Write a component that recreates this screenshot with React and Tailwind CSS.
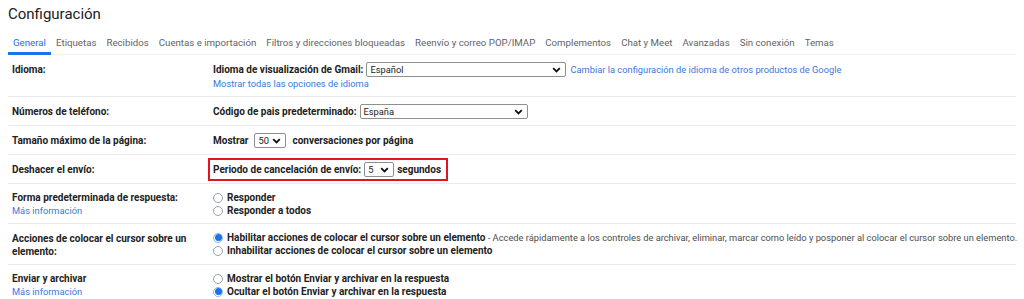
import React from "react";

const TABS = [
  "General",
  "Etiquetas",
  "Recibidos",
  "Cuentas e importación",
  "Filtros y direcciones bloqueadas",
  "Reenvío y correo POP/IMAP",
  "Complementos",
  "Chat y Meet",
  "Avanzadas",
  "Sin conexión",
  "Temas",
];

function Chevron() {
  return (
    <svg width="9" height="6" viewBox="0 0 9 6" className="shrink-0">
      <polyline points="1.2,1.2 4.5,4.5 7.8,1.2" fill="none" stroke="#111" strokeWidth="1.8" />
    </svg>
  );
}

function Select({ value, width }) {
  return (
    <div
      className={`flex h-[15px] items-center justify-between rounded-[2px] border border-[#8f8f8f] bg-white pl-[3px] pr-[4px] text-[9.3px] font-normal text-[#222] ${width}`}
    >
      <span>{value}</span>
      <Chevron />
    </div>
  );
}

function Radio({ checked }) {
  return checked ? (
    <span className="flex h-[10px] w-[10px] shrink-0 items-center justify-center rounded-full border border-[#8ab4f8]">
      <span className="h-[7px] w-[7px] rounded-full bg-[#1a73e8]" />
    </span>
  ) : (
    <span className="h-[10px] w-[10px] shrink-0 rounded-full border border-[#9aa0a6] bg-white" />
  );
}

function RadioLine({ checked, children }) {
  return (
    <div className="flex h-[13px] items-center gap-[4px] whitespace-nowrap">
      <Radio checked={checked} />
      <span>{children}</span>
    </div>
  );
}

function Row({ label, link, children, last }) {
  return (
    <div className={`flex pt-[7px] pb-[6px] ${last ? "" : "border-b border-[#ebebeb]"}`}>
      <div className="w-[205px] shrink-0 pl-[4px] pr-[14px] font-bold leading-[13px] text-[#222]">
        <div className={link ? "" : "pt-[1px]"}>{label}</div>
        {link && <div className="text-[9.3px] font-normal text-[#3c78d8]">{link}</div>}
      </div>
      <div className="min-w-0 flex-1 leading-[13px]">{children}</div>
    </div>
  );
}

export default function App() {
  return (
    <div
      className="h-[299px] w-[1024px] overflow-hidden bg-white text-[10px] text-[#222]"
      style={{ fontFamily: "Roboto, Arial, sans-serif" }}
    >
      <div className="px-2">
        <h1 className="pt-[3px] text-[15px] leading-[22px] text-[#202124]">Configuración</h1>

        {/* tabs */}
        <div className="mt-[5px] flex border-b border-[#efefef] text-[9.7px]">
          {TABS.map((t, i) => (
            <div
              key={t}
              className={`whitespace-nowrap px-[5px] pt-[6px] pb-[3px] leading-[13px] ${
                i === 0 ? "-mb-px border-b-[3px] border-[#1a73e8] pb-[1px] text-[#1a73e8]" : "text-[#5f6368]"
              }`}
            >
              {t}
            </div>
          ))}
        </div>

        {/* settings rows */}
        <Row label="Idioma:">
          <div className="flex items-center gap-[3px] font-bold">
            <span>Idioma de visualización de Gmail:</span>
            <Select value="Español" width="w-[200px]" />
            <span className="ml-[1px] text-[9.3px] font-normal text-[#3c78d8]">
              Cambiar la configuración de idioma de otros productos de Google
            </span>
          </div>
          <div className="text-[9.3px] text-[#3c78d8]">Mostrar todas las opciones de idioma</div>
        </Row>

        <Row label="Números de teléfono:">
          <div className="flex items-center gap-[3px] font-bold">
            <span>Código de pais predeterminado:</span>
            <Select value="España" width="w-[168px]" />
          </div>
        </Row>

        <Row label="Tamaño máximo de la página:">
          <div className="flex items-center gap-[6px] font-bold">
            <span>Mostrar</span>
            <Select value="50" width="w-[32px]" />
            <span>conversaciones por página</span>
          </div>
        </Row>

        <Row label="Deshacer el envío:">
          <div className="-my-[4px] -ml-[5px] inline-flex items-center gap-[3px] border-2 border-[#e3141f] py-[2px] pl-[3px] pr-[5px] font-bold">
            <span>Periodo de cancelación de envío:</span>
            <Select value="5" width="w-[30px]" />
            <span>segundos</span>
          </div>
        </Row>

        <Row label="Forma predeterminada de respuesta:" link="Más información">
          <div className="font-bold">
            <RadioLine>Responder</RadioLine>
            <RadioLine>Responder a todos</RadioLine>
          </div>
        </Row>

        <Row label="Acciones de colocar el cursor sobre un elemento:">
          <div className="font-bold">
            <RadioLine checked>
              Habilitar acciones de colocar el cursor sobre un elemento
              <span className="text-[9.3px] font-normal text-[#4d4d4d]">
                {" "}
                - Accede rápidamente a los controles de archivar, eliminar, marcar como leído y posponer al colocar el
                cursor sobre un elemento.
              </span>
            </RadioLine>
            <RadioLine>Inhabilitar acciones de colocar el cursor sobre un elemento</RadioLine>
          </div>
        </Row>

        <Row label="Enviar y archivar" link="Más información" last>
          <div className="font-bold">
            <RadioLine>Mostrar el botón Enviar y archivar en la respuesta</RadioLine>
            <RadioLine checked>Ocultar el botón Enviar y archivar en la respuesta</RadioLine>
          </div>
        </Row>
      </div>
    </div>
  );
}
